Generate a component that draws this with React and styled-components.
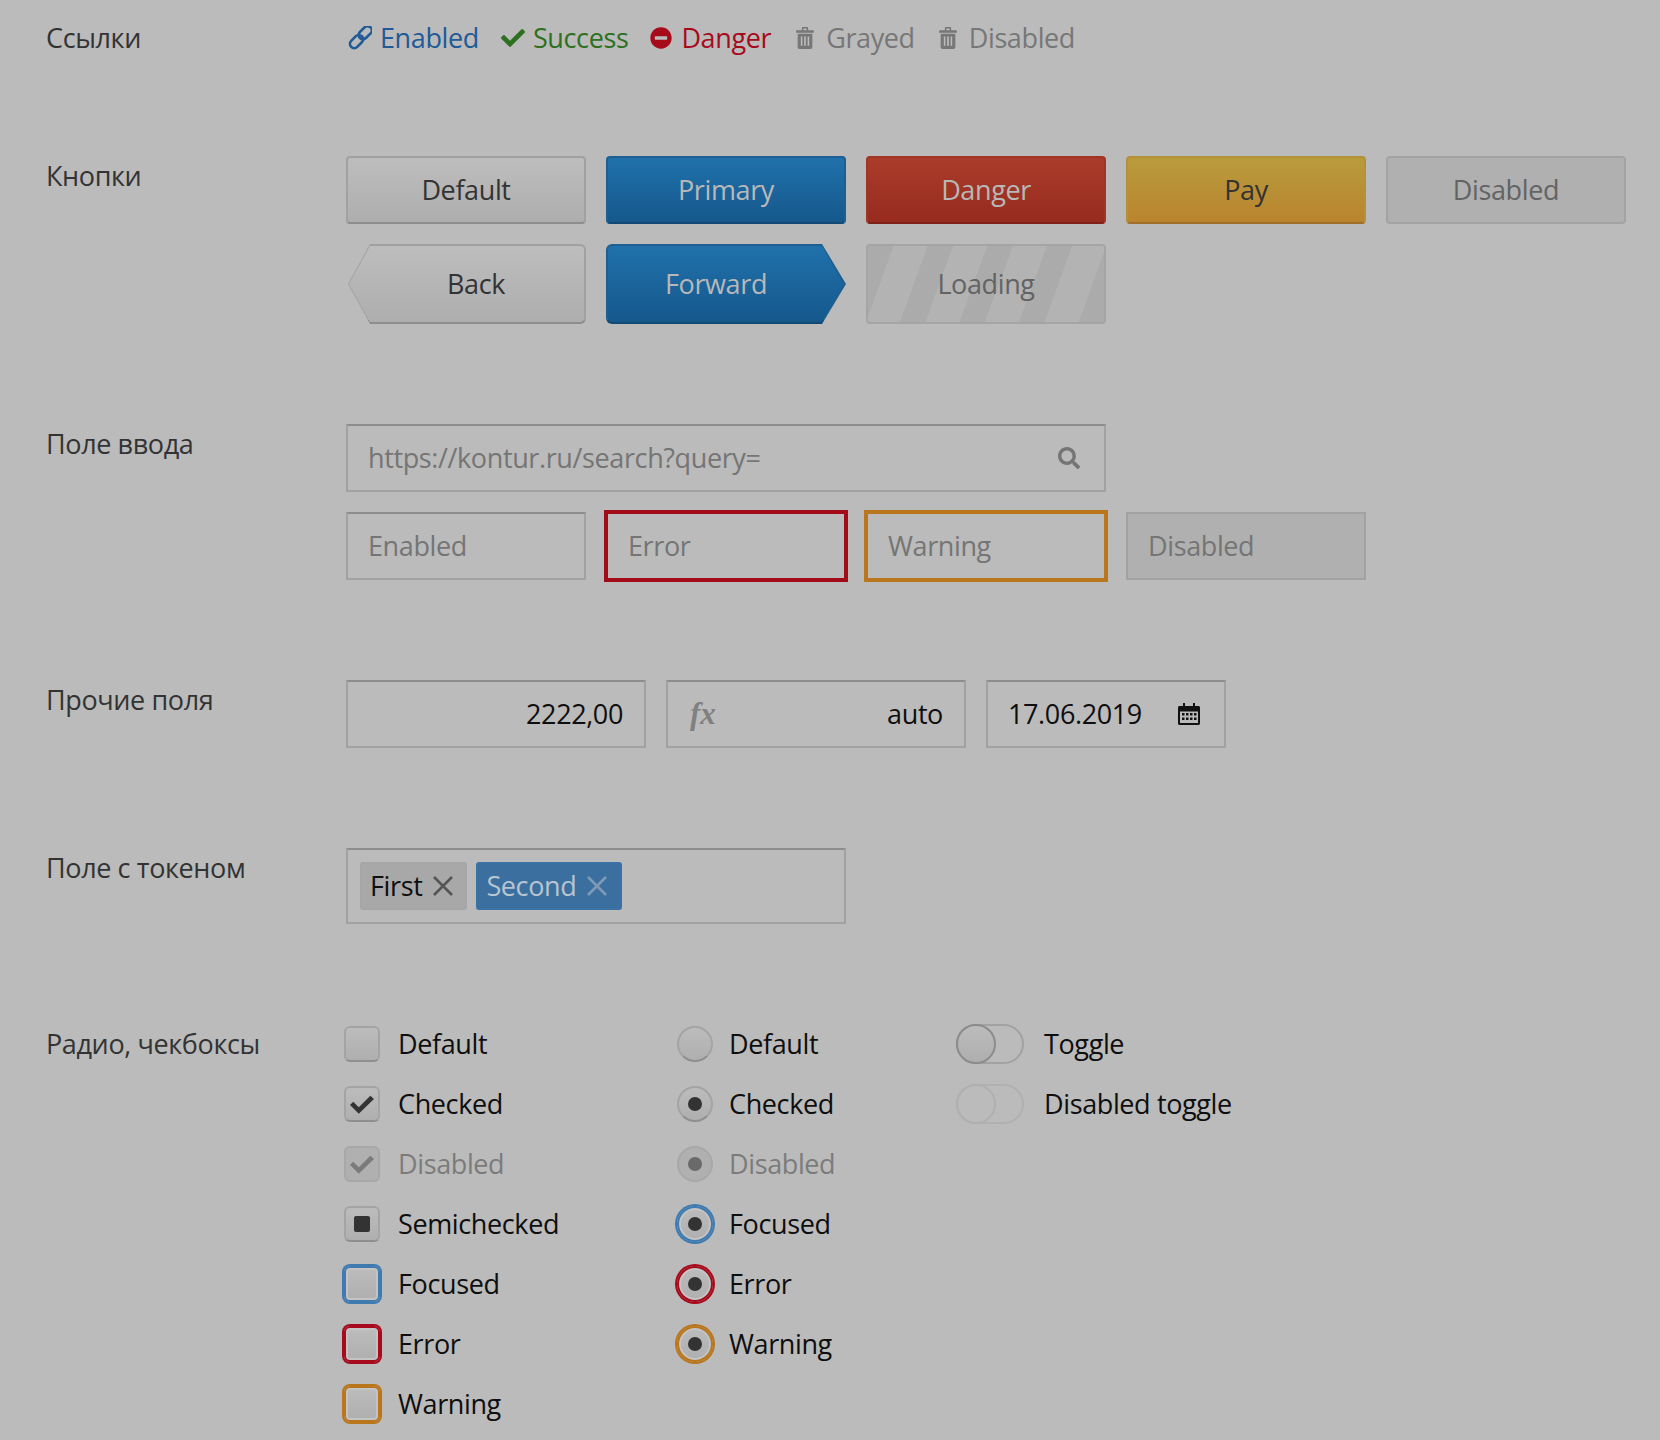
import styled, { createGlobalStyle, css } from 'styled-components'
import { FaCheck, FaMinusCircle, FaSearch } from 'react-icons/fa'

const GlobalStyle = createGlobalStyle`
	* {
		box-sizing: border-box;
	}
	body {
		margin: 0;
		background: #bbbbbb;
		font-family: 'Open Sans', 'Noto Sans', sans-serif;
		font-size: 27px;
		letter-spacing: -0.38px;
		color: #333333;
	}
`

const LinkIcon = () => (
	<svg width="24" height="24" viewBox="0 0 24 24" fill="none" stroke="currentColor" strokeWidth="2.600">
		<rect x="11.200" y="-1.500" width="8.500" height="15" rx="4.200" transform="rotate(45 15.500 8.500)" />
		<rect x="4.300" y="8" width="8.500" height="15" rx="4.200" transform="rotate(45 8.500 15.500)" />
	</svg>
)

const TrashIcon = () => (
	<svg width="18" height="22" viewBox="0 0 17 21" fill="currentColor">
		<path d="M5.5 3V1.2C5.5.5 6 0 6.7 0h3.6c.7 0 1.200.5 1.200 1.200V3H16c.6 0 1 .4 1 1v1.500H0V4c0-.6.4-1 1-1h4.500zM7 3h3V1.500H7V3z" fillRule="evenodd" />
		<path d="M1.500 6.500h14V19c0 1.100-.9 2-2 2h-10c-1.100 0-2-.9-2-2V6.500zM4.500 9v9H6V9H4.500zm3.200 0v9h1.600V9H7.700zM11 9v9h1.500V9H11z" fillRule="evenodd" />
	</svg>
)

const CalendarIcon = () => (
	<svg width="22" height="22" viewBox="0 0 22 22" fill="#111111">
		<rect x="5" y="0" width="2" height="5" />
		<rect x="15" y="0" width="2" height="5" />
		<path
			fillRule="evenodd"
			d="M1.500 3H20.500C21.300 3 22 3.700 22 4.500V20.500C22 21.300 21.300 22 20.500 22H1.500C.7 22 0 21.300 0 20.500V4.500C0 3.700.7 3 1.500 3ZM2 8.500V20H20V8.500H2Z"
		/>
		<path d="M4 10h2.500v2.500H4zM8 10h2.500v2.500H8zM12 10h2.500v2.500H12zM16 10h2.500v2.500H16zM4 14.500h2.500V17H4zM8 14.500h2.500V17H8zM12 14.500h2.500V17H12zM16 14.500h2.500V17H16z" />
	</svg>
)

const CloseIcon = () => (
	<svg width="20" height="20" viewBox="0 0 20 20" stroke="currentColor" strokeWidth="2.600" fill="none">
		<path d="M1 1l18 18M19 1L1 19" />
	</svg>
)

const CheckIcon = () => (
	<svg width="24" height="19" viewBox="0 0 26 20" fill="currentColor">
		<path d="M0 10.500L3.500 7l6 6L22 .5 26 4 9.500 20z" />
	</svg>
)

export default function App() {
	return (
		<Page>
			<GlobalStyle />
			<LinksRow>
				<Label>Ссылки</Label>
				<Links>
					<LinkItem $color="#215a96">
						<LinkIcon />
						<span>Enabled</span>
					</LinkItem>
					<LinkItem $color="#2d7020">
						<FaCheck size={24} />
						<span>Success</span>
					</LinkItem>
					<LinkItem $color="#a70a1b" $gap="9px">
						<FaMinusCircle size={22} />
						<span>Danger</span>
					</LinkItem>
					<LinkItem $color="#777777" $gap="12px" $push="3px">
						<TrashIcon />
						<span>Grayed</span>
					</LinkItem>
					<LinkItem $color="#777777" $gap="12px" $push="2px">
						<TrashIcon />
						<span>Disabled</span>
					</LinkItem>
				</Links>
			</LinksRow>

			<Row>
				<Label>Кнопки</Label>
				<Stack>
					<Line>
						<Button>Default</Button>
						<Button $variant="primary">Primary</Button>
						<Button $variant="danger">Danger</Button>
						<Button $variant="pay">Pay</Button>
						<Button $variant="disabled">Disabled</Button>
					</Line>
					<Line>
						<ArrowButton $dir="left">Back</ArrowButton>
						<ArrowButton $dir="right" $variant="primary">
							Forward
						</ArrowButton>
						<LoadingButton>Loading</LoadingButton>
					</Line>
				</Stack>
			</Row>

			<Row>
				<Label>Поле ввода</Label>
				<Stack>
					<Field $width="760px">
						<Placeholder>https://kontur.ru/search?query=</Placeholder>
						<SearchGlyph>
							<FaSearch size={22} />
						</SearchGlyph>
					</Field>
					<Line>
						<Field>
							<Placeholder>Enabled</Placeholder>
						</Field>
						<Field $state="#a30b19">
							<Placeholder>Error</Placeholder>
						</Field>
						<Field $state="#b9761d">
							<Placeholder>Warning</Placeholder>
						</Field>
						<Field $disabled>
							<Placeholder>Disabled</Placeholder>
						</Field>
					</Line>
				</Stack>
			</Row>

			<Row>
				<Label>Прочие поля</Label>
				<Line>
					<Field $width="300px" $align="flex-end">
						<Value>2222,00</Value>
					</Field>
					<Field $width="300px">
						<Formula>fx</Formula>
						<Value>auto</Value>
					</Field>
					<Field>
						<Value>17.06.2019</Value>
						<CalendarGlyph>
							<CalendarIcon />
						</CalendarGlyph>
					</Field>
				</Line>
			</Row>

			<Row>
				<Label>Поле с токеном</Label>
				<TokenField>
					<Token>
						First
						<TokenClose>
							<CloseIcon />
						</TokenClose>
					</Token>
					<Token $active>
						Second
						<TokenClose $active>
							<CloseIcon />
						</TokenClose>
					</Token>
				</TokenField>
			</Row>

			<Row>
				<Label>Радио, чекбоксы</Label>
				<Columns>
					<CheckColumn>
						<Option>
							<Box />
							<OptionText>Default</OptionText>
						</Option>
						<Option>
							<Box>
								<CheckIcon />
							</Box>
							<OptionText>Checked</OptionText>
						</Option>
						<Option>
							<Box $disabled>
								<CheckIcon />
							</Box>
							<OptionText $disabled>Disabled</OptionText>
						</Option>
						<Option>
							<Box>
								<SemiMark />
							</Box>
							<OptionText>Semichecked</OptionText>
						</Option>
						<Option>
							<Box $ring="#3f7bb0" />
							<OptionText>Focused</OptionText>
						</Option>
						<Option>
							<Box $ring="#a70a1b" />
							<OptionText>Error</OptionText>
						</Option>
						<Option>
							<Box $ring="#b9761d" />
							<OptionText>Warning</OptionText>
						</Option>
					</CheckColumn>
					<RadioColumn>
						<Option $gap="16px">
							<Radio />
							<OptionText>Default</OptionText>
						</Option>
						<Option $gap="16px">
							<Radio>
								<Dot />
							</Radio>
							<OptionText>Checked</OptionText>
						</Option>
						<Option $gap="16px">
							<Radio $disabled>
								<Dot $disabled />
							</Radio>
							<OptionText $disabled>Disabled</OptionText>
						</Option>
						<Option $gap="16px">
							<Radio $ring="#3f7bb0">
								<Dot />
							</Radio>
							<OptionText>Focused</OptionText>
						</Option>
						<Option $gap="16px">
							<Radio $ring="#a70a1b">
								<Dot />
							</Radio>
							<OptionText>Error</OptionText>
						</Option>
						<Option $gap="16px">
							<Radio $ring="#b9761d">
								<Dot />
							</Radio>
							<OptionText>Warning</OptionText>
						</Option>
					</RadioColumn>
					<ToggleColumn>
						<Option $gap="20px">
							<Toggle>
								<Handle />
							</Toggle>
							<OptionText>Toggle</OptionText>
						</Option>
						<Option $gap="20px">
							<Toggle $disabled>
								<Handle $disabled />
							</Toggle>
							<OptionText>Disabled toggle</OptionText>
						</Option>
					</ToggleColumn>
				</Columns>
			</Row>
		</Page>
	)
}

const Page = styled.div`
	width: 1660px;
	height: 1440px;
	overflow: hidden;
	padding: 18px 0 0 46px;
	display: flex;
	flex-direction: column;
	gap: 100px;
`
const Row = styled.section`
	display: grid;
	grid-template-columns: 300px 1fr;
	align-items: start;
`
const LinksRow = styled(Row)`
	height: 38px;
`
const Label = styled.div`
	line-height: 40px;
	color: #333333;
`
const Links = styled.div`
	display: flex;
	gap: 22px;
	padding-left: 2px;
`
const LinkItem = styled.span`
	display: flex;
	align-items: center;
	gap: ${(p) => p.$gap || '8px'};
	margin-left: ${(p) => p.$push || '0'};
	line-height: 40px;
	color: ${(p) => p.$color};
`
const Stack = styled.div`
	display: flex;
	flex-direction: column;
	gap: 20px;
`
const Line = styled.div`
	display: flex;
	gap: 20px;
`

const buttonColors = {
	default: { top: '#bdbdbd', bottom: '#aeaeae', border: '#a1a1a1', edge: '#8d8d8d', text: '#333333' },
	primary: { top: '#2071ab', bottom: '#15588c', border: '#1e5f8f', edge: '#124a75', text: '#b8b8b8' },
	danger: { top: '#aa3c2a', bottom: '#962b1e', border: '#a03425', edge: '#7f2118', text: '#b8b8b8' },
	pay: { top: '#b99b3c', bottom: '#b9842e', border: '#b3903a', edge: '#a0702a', text: '#333333' },
	disabled: { top: '#b0b0b0', bottom: '#b0b0b0', border: '#a3a3a3', edge: '#a3a3a3', text: '#636363' },
}
const palette = (p) => buttonColors[p.$variant || 'default']

const Button = styled.div`
	width: 240px;
	height: 68px;
	display: flex;
	align-items: center;
	justify-content: center;
	padding-bottom: 1px;
	border: 2px solid ${(p) => palette(p).border};
	border-bottom-color: ${(p) => palette(p).edge};
	border-radius: 4px;
	background: linear-gradient(${(p) => palette(p).top}, ${(p) => palette(p).bottom});
	color: ${(p) => palette(p).text};
`
const arrowShape = {
	left: 'polygon(24px 0, 100% 0, 100% 100%, 24px 100%, 2px 50%)',
	right: 'polygon(0 0, calc(100% - 24px) 0, 100% 50%, calc(100% - 24px) 100%, 0 100%)',
}
const innerShape = {
	left: 'polygon(22px 0, 100% 0, 100% 100%, 22px 100%, 1px 50%)',
	right: 'polygon(0 0, calc(100% - 22px) 0, calc(100% - 1px) 50%, calc(100% - 22px) 100%, 0 100%)',
}
const ArrowButton = styled.div`
	position: relative;
	width: 240px;
	height: 80px;
	display: flex;
	align-items: center;
	justify-content: center;
	border-radius: 6px;
	background: linear-gradient(${(p) => palette(p).border} 95%, ${(p) => palette(p).edge} 95%);
	clip-path: ${(p) => arrowShape[p.$dir]};
	color: ${(p) => palette(p).text};
	isolation: isolate;
	padding: ${(p) => (p.$dir === 'left' ? '0 0 1px 20px' : '0 20px 1px 0')};
	&::before {
		content: '';
		position: absolute;
		inset: 2px;
		z-index: -1;
		border-radius: 4px;
		background: linear-gradient(${(p) => palette(p).top}, ${(p) => palette(p).bottom});
		clip-path: ${(p) => innerShape[p.$dir]};
	}
`
const LoadingButton = styled(Button)`
	height: 80px;
	border-color: #a5a5a5;
	color: #636363;
	background: repeating-linear-gradient(110deg, #ababab 0 24px, #b3b3b3 24px 56px) padding-box;
`

const Field = styled.div`
	width: ${(p) => p.$width || '240px'};
	height: 68px;
	display: flex;
	align-items: center;
	justify-content: ${(p) => p.$align || 'space-between'};
	padding: 0 21px 1px 20px;
	border: 2px solid #a2a2a2;
	border-top-color: #8d8d8d;
	background: ${(p) => (p.$disabled ? '#b0b0b0' : 'transparent')};
	${(p) =>
		p.$disabled &&
		css`
			border-color: #a2a2a2;
		`}
	${(p) =>
		p.$state &&
		css`
			border-color: ${p.$state};
			box-shadow: 0 0 0 2px ${p.$state};
		`}
`
const Placeholder = styled.span`
	color: #757575;
`
const Value = styled.span`
	color: #0e0e0e;
`
const SearchGlyph = styled.span`
	display: flex;
	margin-right: 3px;
	color: #757575;
`
const CalendarGlyph = styled.span`
	display: flex;
	margin-right: 3px;
`
const Formula = styled.span`
	margin-left: 2px;
	font-family: 'Liberation Serif', serif;
	font-style: italic;
	font-weight: 700;
	font-size: 31px;
	letter-spacing: 0;
	color: #808080;
`
const TokenField = styled.div`
	width: 500px;
	height: 76px;
	display: flex;
	gap: 9px;
	padding: 12px;
	border: 2px solid #a2a2a2;
	border-top-color: #8d8d8d;
`
const Token = styled.div`
	height: 48px;
	display: flex;
	align-items: center;
	gap: 11px;
	padding: 0 ${(p) => (p.$active ? '13px' : '12px')} 2px 8px;
	border: 2px solid ${(p) => (p.$active ? '#3b72a6' : '#a6a6a6')};
	border-radius: 3px;
	background: ${(p) => (p.$active ? '#3a6f9f' : '#a8a8a8')};
	color: ${(p) => (p.$active ? '#b8c4cf' : '#0e0e0e')};
`
const TokenClose = styled.span`
	display: flex;
	padding-top: 2px;
	color: ${(p) => (p.$active ? '#7e9ab5' : '#555555')};
`
const Columns = styled.div`
	display: flex;
	margin-left: -2px;
`
const OptionGroup = styled.div`
	display: flex;
	flex-direction: column;
	gap: 20px;
`
const CheckColumn = styled(OptionGroup)`
	width: 333px;
`
const RadioColumn = styled(OptionGroup)`
	width: 279px;
`
const ToggleColumn = styled(OptionGroup)``
const Option = styled.div`
	height: 40px;
	display: flex;
	align-items: center;
	gap: ${(p) => p.$gap || '18px'};
`
const OptionText = styled.span`
	padding-bottom: 2px;
	color: ${(p) => (p.$disabled ? '#7b7b7b' : '#0e0e0e')};
`

const ring = (p) =>
	p.$ring
		? css`
				border-color: ${p.$ring};
				box-shadow: 0 0 0 2px ${p.$ring}, inset 0 0 0 2px #c4c4c4;
		  `
		: ''

const Box = styled.span`
	flex: none;
	width: 36px;
	height: 36px;
	display: flex;
	align-items: center;
	justify-content: center;
	border: 2px solid ${(p) => (p.$disabled ? '#a8a8a8' : '#a4a4a4')};
	border-bottom-color: ${(p) => (p.$disabled ? '#a8a8a8' : '#8f8f8f')};
	border-radius: 6px;
	background: ${(p) => (p.$disabled ? '#b0b0b0' : 'linear-gradient(#bcbcbc, #afafaf)')};
	color: ${(p) => (p.$disabled ? '#7b7b7b' : '#333333')};
	${ring}
`
const SemiMark = styled.span`
	width: 16px;
	height: 16px;
	border-radius: 2px;
	background: #333333;
`
const Radio = styled(Box)`
	border-radius: 50%;
`
const Dot = styled.span`
	width: 14px;
	height: 14px;
	border-radius: 50%;
	background: ${(p) => (p.$disabled ? '#6a6a6a' : '#333333')};
`
const Toggle = styled.span`
	flex: none;
	width: 68px;
	height: 40px;
	display: flex;
	border: 2px solid ${(p) => (p.$disabled ? '#b0b0b0' : '#a2a2a2')};
	border-radius: 20px;
`
const Handle = styled.span`
	width: 40px;
	height: 40px;
	margin: -2px;
	border: 2px solid ${(p) => (p.$disabled ? '#b0b0b0' : '#8c8c8c')};
	border-radius: 50%;
	background: ${(p) => (p.$disabled ? 'transparent' : 'linear-gradient(#bcbcbc, #aeaeae)')};
`
